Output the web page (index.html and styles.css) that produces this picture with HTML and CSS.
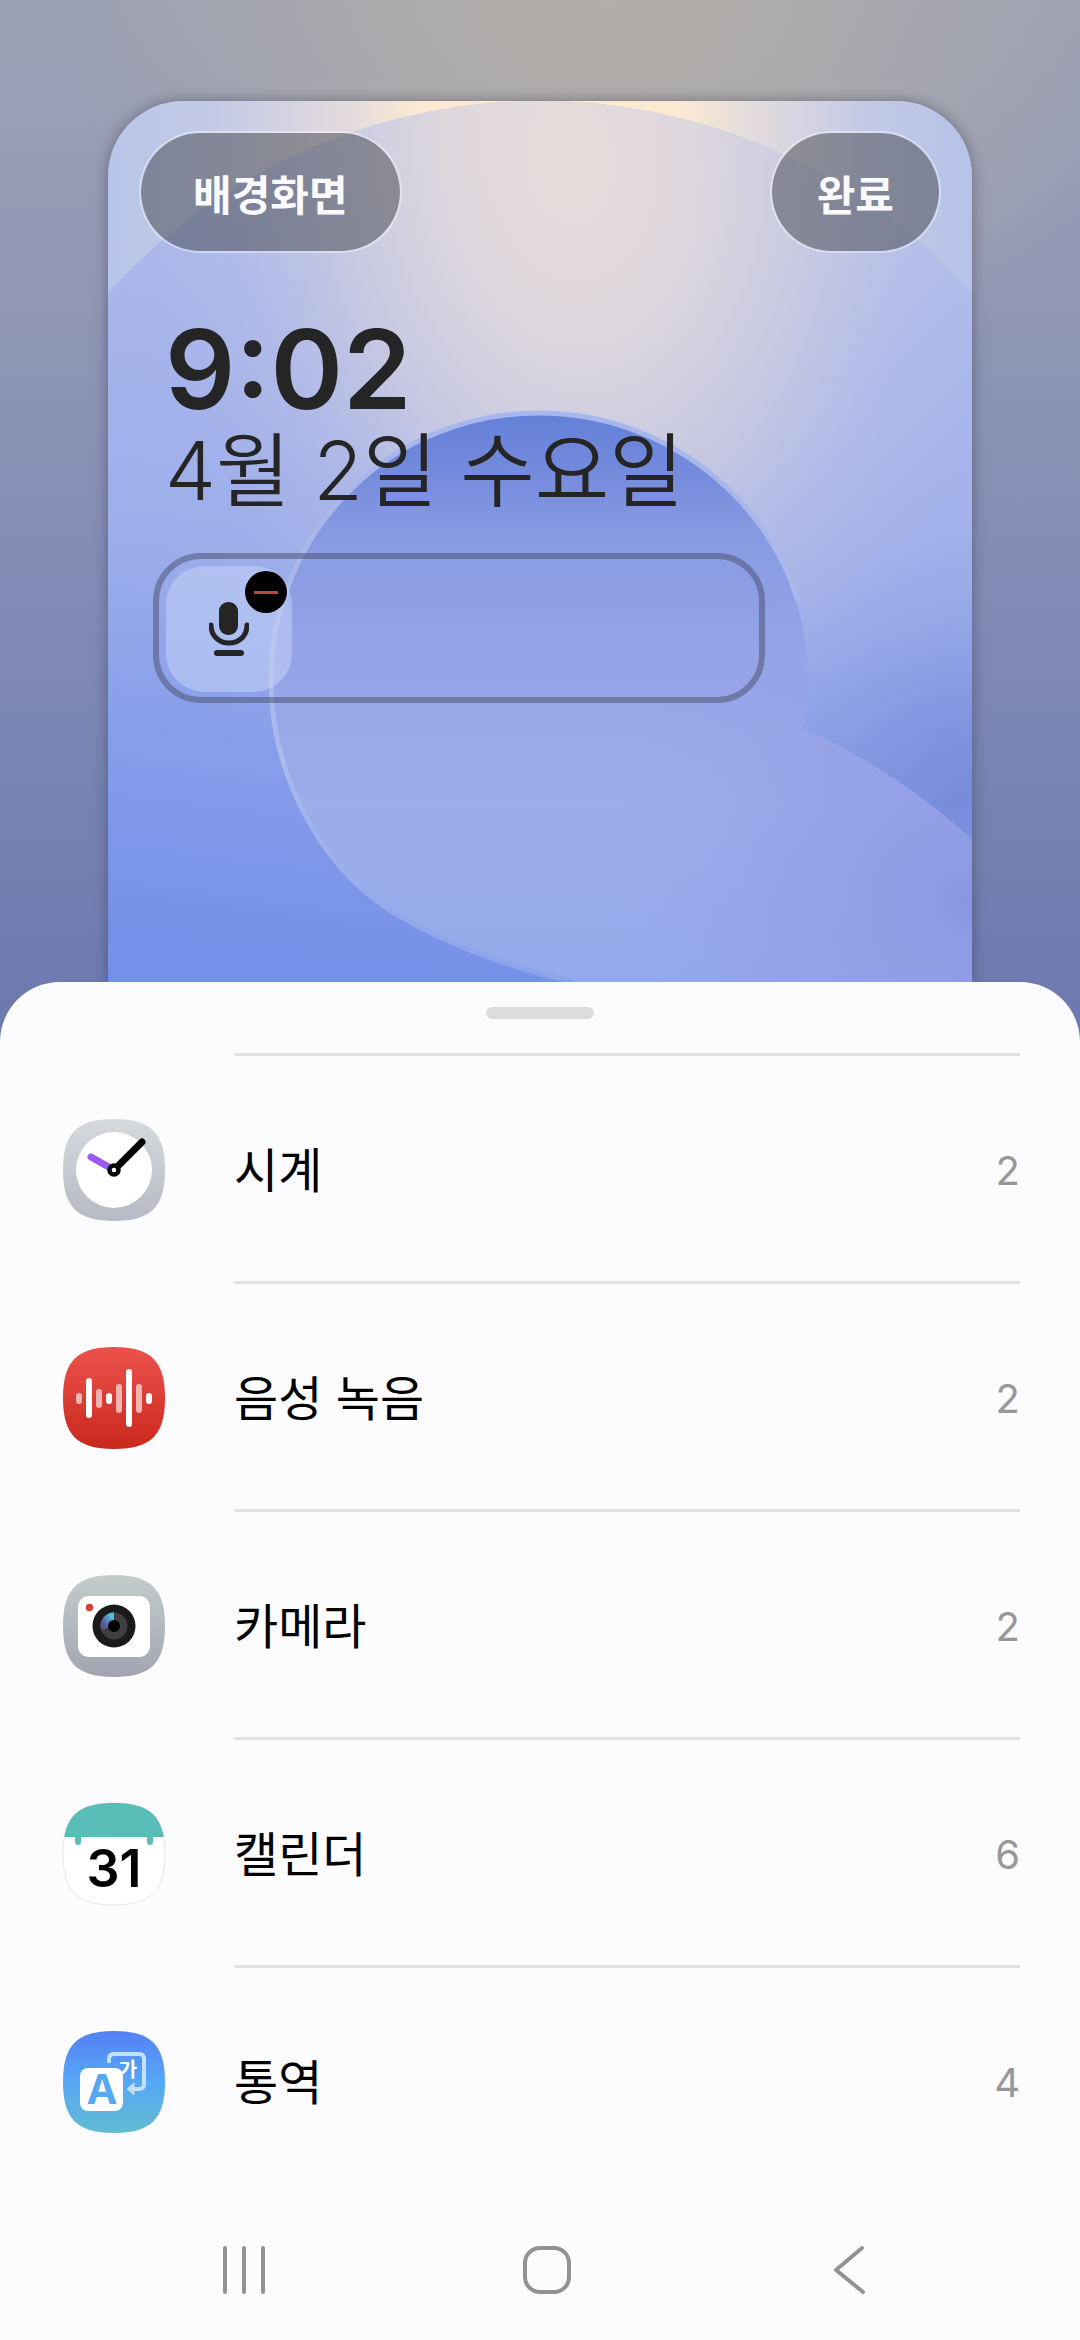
FILE: index.html
```html
<!DOCTYPE html>
<html lang="ko">

<head>
    <meta charset="UTF-8" />
    <meta name="viewport" content="width=device-width, initial-scale=1.0" />
    <title>잠금화면 위젯 편집</title>
    <link rel="stylesheet" href="styles.css">
</head>

<body>
    <main class="editor">
        <section class="preview">
            <!-- 배경화면 -->
            <svg class="wallpaper" viewBox="0 0 864 881" preserveAspectRatio="xMidYMin slice" aria-hidden="true">
                <defs>
                    <linearGradient id="sky" x1="0" x2="1" y1="0" y2="0">
                        <stop offset="0" stop-color="#b7c5e9" />
                        <stop offset="0.14" stop-color="#c6cbe5" />
                        <stop offset="0.28" stop-color="#e4dbdd" />
                        <stop offset="0.36" stop-color="#fbe9d2" />
                        <stop offset="0.66" stop-color="#fbe9d2" />
                        <stop offset="0.76" stop-color="#e0dadf" />
                        <stop offset="0.88" stop-color="#c2c9e6" />
                        <stop offset="1" stop-color="#b5c3e8" />
                    </linearGradient>
                    <linearGradient id="dome" gradientUnits="userSpaceOnUse" x1="520" x2="400" y1="0" y2="881">
                        <stop offset="0" stop-color="#b8c2e8" />
                        <stop offset="0.25" stop-color="#a9b7ea" />
                        <stop offset="0.55" stop-color="#9eaeea" />
                        <stop offset="0.78" stop-color="#869eea" />
                        <stop offset="1" stop-color="#7590e8" />
                    </linearGradient>
                    <radialGradient id="glow" gradientUnits="userSpaceOnUse" cx="0" cy="0" r="1" gradientTransform="translate(462 60) rotate(-6) scale(430 640)">
                        <stop offset="0" stop-color="#e8dcda" />
                        <stop offset="0.3" stop-color="#e0d9dd" stop-opacity="0.92" />
                        <stop offset="0.55" stop-color="#d3d0e0" stop-opacity="0.7" />
                        <stop offset="0.8" stop-color="#c3c6e4" stop-opacity="0.25" />
                        <stop offset="1" stop-color="#b5beea" stop-opacity="0" />
                    </radialGradient>
                    <radialGradient id="shade" gradientUnits="userSpaceOnUse" cx="0" cy="0" r="1" gradientTransform="translate(850 700) rotate(-40) scale(330 260)">
                        <stop offset="0" stop-color="#768cdb" />
                        <stop offset="0.35" stop-color="#7f93df" stop-opacity="0.8" />
                        <stop offset="0.7" stop-color="#8b9de3" stop-opacity="0.35" />
                        <stop offset="1" stop-color="#93a3e6" stop-opacity="0" />
                    </radialGradient>
                    <linearGradient id="drop" gradientUnits="userSpaceOnUse" x1="432" x2="432" y1="314" y2="890">
                        <stop offset="0" stop-color="#6480d9" />
                        <stop offset="0.08" stop-color="#7189dc" />
                        <stop offset="0.2" stop-color="#8699e2" />
                        <stop offset="0.4" stop-color="#94a3e6" />
                        <stop offset="0.68" stop-color="#9daceb" />
                        <stop offset="1" stop-color="#93a9ea" />
                    </linearGradient>
                    <radialGradient id="violet" gradientUnits="userSpaceOnUse" cx="860" cy="800" r="360">
                        <stop offset="0" stop-color="#8b96e2" />
                        <stop offset="1" stop-color="#98a5e8" stop-opacity="0" />
                    </radialGradient>
                    <linearGradient id="rim" gradientUnits="userSpaceOnUse" x1="430" x2="430" y1="310" y2="900">
                        <stop offset="0" stop-color="#a7b6ec" />
                        <stop offset="0.25" stop-color="#a9b7ea" />
                        <stop offset="0.6" stop-color="#aab9ee" />
                        <stop offset="1" stop-color="#86a0ea" />
                    </linearGradient>
                </defs>
                <rect width="864" height="881" fill="url(#sky)" />
                <circle cx="432" cy="582" r="582" fill="url(#dome)" />
                <circle cx="432" cy="582" r="582" fill="url(#glow)" />
                <rect y="300" width="864" height="581" fill="url(#shade)" />
                <path d="M162 579C162 432 280 312 431 312S700 432 700 579C700 600 698 615 694 628C760 655 815 695 864 738V881H465C400 866 335 842 280 808C210 762 162 670 162 579Z" fill="url(#drop)" />
                <path d="M700 579C700 600 698 615 694 628C760 655 815 695 864 738V881H465V490H690Z" fill="url(#violet)" />
                <path d="M465 881C400 866 335 842 280 808C210 762 163 670 163 579C163 432 281 312 431 312C560 312 660 400 690 500" fill="none" stroke="url(#rim)" stroke-width="5" />
            </svg>

            <header class="toolbar">
                <button type="button" class="pill">배경화면</button>
                <button type="button" class="pill">완료</button>
            </header>

            <div class="clock">
                <time class="time">9:02</time>
                <p class="date">4월 2일 수요일</p>
            </div>

            <div class="widget-slot">
                <div class="widget">
                    <svg class="mic" viewBox="0 0 40 54" aria-hidden="true">
                        <rect x="10" y="0" width="19" height="33" rx="9" fill="#252525" />
                        <path d="M2 23C2 34 10 41 20 41S38 34 38 23" fill="none" stroke="#252525" stroke-width="5" stroke-linecap="round" />
                        <path d="M8 51H32" stroke="#252525" stroke-width="6" stroke-linecap="round" />
                    </svg>
                    <button type="button" class="remove" aria-label="위젯 삭제"></button>
                </div>
            </div>
        </section>

        <section class="sheet">
            <div class="handle"></div>
            <ul class="app-list">
                <li class="app">
                    <svg class="app-icon" viewBox="0 0 102 102" aria-hidden="true">
                        <defs>
                            <linearGradient id="clockBg" x2="0" y2="1">
                                <stop offset="0" stop-color="#d5dade" />
                                <stop offset="1" stop-color="#b7bac5" />
                            </linearGradient>
                        </defs>
                        <path d="M51 0C88 0 102 14 102 51S88 102 51 102S0 88 0 51S14 0 51 0Z" fill="url(#clockBg)" />
                        <circle cx="51" cy="51" r="38" fill="#fff" />
                        <path d="M28 38L51 51" stroke="#9b59f5" stroke-width="7" stroke-linecap="round" />
                        <path d="M51 51L79 23" stroke="#000" stroke-width="7" stroke-linecap="round" />
                        <circle cx="51" cy="51" r="4.5" fill="#fff" stroke="#000" stroke-width="4.5" />
                    </svg>
                    <div class="app-row"><span>시계</span><span class="count">2</span></div>
                </li>
                <li class="app">
                    <svg class="app-icon" viewBox="0 0 102 102" aria-hidden="true">
                        <defs>
                            <linearGradient id="recBg" x2="0" y2="1">
                                <stop offset="0" stop-color="#ec524c" />
                                <stop offset="1" stop-color="#c9281c" />
                            </linearGradient>
                        </defs>
                        <path d="M51 0C88 0 102 14 102 51S88 102 51 102S0 88 0 51S14 0 51 0Z" fill="url(#recBg)" />
                        <g stroke="#fff" stroke-width="6" stroke-linecap="round">
                            <path d="M26 34V68M46 49V54M66 25V77M86 49V54" />
                            <path d="M16 49V54M36 45V58M56 40V63M76 40V63" stroke="#f6b3b0" />
                        </g>
                    </svg>
                    <div class="app-row"><span>음성 녹음</span><span class="count">2</span></div>
                </li>
                <li class="app">
                    <svg class="app-icon" viewBox="0 0 102 102" aria-hidden="true">
                        <defs>
                            <linearGradient id="camBg" x2="0" y2="1">
                                <stop offset="0" stop-color="#c4cccd" />
                                <stop offset="1" stop-color="#a1a5b1" />
                            </linearGradient>
                            <linearGradient id="lens" x1="1" x2="0" y2="1">
                                <stop offset="0.2" stop-color="#4fc0d8" />
                                <stop offset="0.6" stop-color="#5a6aa8" />
                                <stop offset="1" stop-color="#5b4568" />
                            </linearGradient>
                        </defs>
                        <path d="M51 0C88 0 102 14 102 51S88 102 51 102S0 88 0 51S14 0 51 0Z" fill="url(#camBg)" />
                        <rect x="15" y="21" width="72" height="61" rx="11" fill="#fff" />
                        <circle cx="26.5" cy="32.5" r="3.7" fill="#d8403a" />
                        <circle cx="51" cy="51" r="21.5" fill="#1a1a1b" />
                        <circle cx="51" cy="51" r="13.5" fill="#3f3e41" />
                        <path d="M51 51V37.5A13.5 13.5 0 0 0 38 55Z" fill="url(#lens)" />
                        <circle cx="51" cy="51" r="6" fill="#000" />
                    </svg>
                    <div class="app-row"><span>카메라</span><span class="count">2</span></div>
                </li>
                <li class="app">
                    <svg class="app-icon" viewBox="0 0 102 102" aria-hidden="true">
                        <defs>
                            <clipPath id="calTop">
                                <rect width="102" height="34" />
                            </clipPath>
                        </defs>
                        <path d="M51 0C88 0 102 14 102 51S88 102 51 102S0 88 0 51S14 0 51 0Z" fill="#fff" stroke="#e6e6e8" />
                        <path d="M51 0C88 0 102 14 102 51S88 102 51 102S0 88 0 51S14 0 51 0Z" fill="#58bdb7" clip-path="url(#calTop)" />
                        <path d="M15 33V39M87 33V39" stroke="#58bdb7" stroke-width="6" stroke-linecap="round" />
                        <text class="cal-day" x="51" y="84" text-anchor="middle">31</text>
                    </svg>
                    <div class="app-row"><span>캘린더</span><span class="count">6</span></div>
                </li>
                <li class="app">
                    <svg class="app-icon" viewBox="0 0 102 102" aria-hidden="true">
                        <defs>
                            <linearGradient id="trBg" x2="0" y2="1">
                                <stop offset="0" stop-color="#5580f5" />
                                <stop offset="0.5" stop-color="#56a8f5" />
                                <stop offset="1" stop-color="#62bcd2" />
                            </linearGradient>
                        </defs>
                        <path d="M51 0C88 0 102 14 102 51S88 102 51 102S0 88 0 51S14 0 51 0Z" fill="url(#trBg)" />
                        <path d="M46 32V28Q46 23 51 23H76Q81 23 81 28V53Q81 58 76 58H69" fill="none" stroke="#c3e0fc" stroke-width="4" />
                        <path d="M64 58L71 52V64Z" fill="#c3e0fc" stroke="#c3e0fc" stroke-linejoin="round" />
                        <text class="tr-ko" x="65" y="46" text-anchor="middle">가</text>
                        <rect x="17" y="37" width="43" height="43" rx="8" fill="#fff" />
                        <text class="tr-en" x="39" y="73" text-anchor="middle">A</text>
                    </svg>
                    <div class="app-row"><span>통역</span><span class="count">4</span></div>
                </li>
            </ul>

            <!-- 하단 내비게이션 -->
            <nav class="nav-bar">
                <button type="button" aria-label="최근 앱">
                    <svg viewBox="0 0 50 50"><path d="M6 3V47M25 3V47M44 3V47" /></svg>
                </button>
                <button type="button" aria-label="홈">
                    <svg viewBox="0 0 50 50"><rect x="3" y="3" width="44" height="44" rx="15" /></svg>
                </button>
                <button type="button" aria-label="뒤로">
                    <svg viewBox="0 0 50 50"><path d="M38 3L12 25L39 47" /></svg>
                </button>
            </nav>
        </section>
    </main>
</body>

</html>
```
FILE: styles.css
```css
* {
    box-sizing: border-box;
}

body {
    margin: 0;
    font-family: Inter, 'Noto Sans CJK KR', sans-serif;
    color: #000;
}

button {
    font-family: inherit;
    cursor: pointer;
}

.editor {
    min-height: 100vh;
    display: flex;
    flex-direction: column;
    background:
        radial-gradient(ellipse 50% 460px at 56% 0, #b3aea8 0%, rgba(176, 172, 170, 0.8) 40%, rgba(160, 163, 180, 0) 100%),
        linear-gradient(#9ba1b4 0, #9299b5 260px, #7f8ab4 640px, #6d7ab0 1000px);
}

.preview {
    position: relative;
    isolation: isolate;
    width: 80%;
    margin: 101px auto 0;
    padding: 30px 31px 279px;
    border-radius: 75px 75px 0 0;
    overflow: hidden;
    box-shadow: 0 0 14px rgba(30, 30, 50, 0.4);
}

/* 내용 뒤에 깔리는 배경 */
.wallpaper {
    position: absolute;
    top: 0;
    left: 0;
    width: 100%;
    height: 100%;
    z-index: -1;
}

.toolbar {
    display: flex;
    justify-content: space-between;
    margin-bottom: 60px;
}

.pill {
    height: 122px;
    padding: 0 45px;
    border: 2px solid rgba(255, 255, 255, 0.4);
    border-radius: 61px;
    background: rgba(66, 68, 74, 0.5);
    background-clip: padding-box;
    color: #fafafc;
    font-size: 42px;
    font-weight: bold;
}

.pill:first-child {
    padding: 0 52px;
}

.clock {
    padding-left: 26px;
    color: #252525;
}

.time {
    display: block;
    font-size: 110px;
    line-height: 112px;
    font-weight: 600;
}

.date {
    margin: 0;
    font-size: 81px;
    line-height: 92px;
    font-weight: 350;
}

.widget-slot {
    width: 612px;
    height: 150px;
    margin: 36px 0 0 14px;
    padding: 7px;
    border: 6px solid rgba(72, 77, 105, 0.5);
    border-radius: 48px;
}

.widget {
    position: relative;
    display: flex;
    align-items: center;
    justify-content: center;
    width: 126px;
    height: 126px;
    border-radius: 38px;
    background: rgba(200, 214, 248, 0.5);
}

.mic {
    width: 40px;
    height: 54px;
}

.remove {
    position: absolute;
    top: 5px;
    right: 5px;
    display: flex;
    align-items: center;
    justify-content: center;
    width: 42px;
    height: 42px;
    padding: 0;
    border: none;
    border-radius: 50%;
    background: #000;
}

.remove::before {
    content: "";
    width: 24px;
    height: 3px;
    background: #b5483f;
}

.sheet {
    position: relative;
    flex: 1;
    display: flex;
    flex-direction: column;
    padding-top: 25px;
    border-radius: 60px 60px 0 0;
    background: #fcfcfe;
}

.handle {
    width: 108px;
    height: 12px;
    margin: 0 auto 34px;
    border-radius: 6px;
    background: #dcdcde;
}

.app-list {
    margin: 0;
    padding: 0 60px 0 63px;
    list-style: none;
}

.app {
    display: flex;
    align-items: center;
    gap: 69px;
    height: 228px;
}

.app-icon {
    flex: none;
    width: 102px;
    height: 102px;
    margin-top: 5px;
    overflow: visible;
}

.app-row {
    flex: 1;
    display: flex;
    align-items: center;
    justify-content: space-between;
    height: 100%;
    padding-top: 4px;
    border-top: 3px solid #e3e3e5;
    font-size: 48px;
    line-height: 68px;
}

.count {
    color: #97979a;
    font-size: 40px;
}

.cal-day {
    font-size: 52px;
    font-weight: 600;
}

.tr-ko {
    fill: #fff;
    font-size: 20px;
    font-weight: bold;
}

.tr-en {
    fill: #56a8f0;
    font-family: 'Open Sans', sans-serif;
    font-size: 42px;
    font-weight: bold;
}

.nav-bar {
    display: flex;
    justify-content: space-between;
    margin-top: auto;
    padding: 0 206px 45px 219px;
}

.nav-bar button {
    padding: 0;
    border: none;
    background: none;
}

.nav-bar svg {
    display: block;
    width: 50px;
    height: 50px;
    fill: none;
    stroke: #929294;
    stroke-width: 4px;
    stroke-linecap: round;
    stroke-linejoin: round;
}
```
